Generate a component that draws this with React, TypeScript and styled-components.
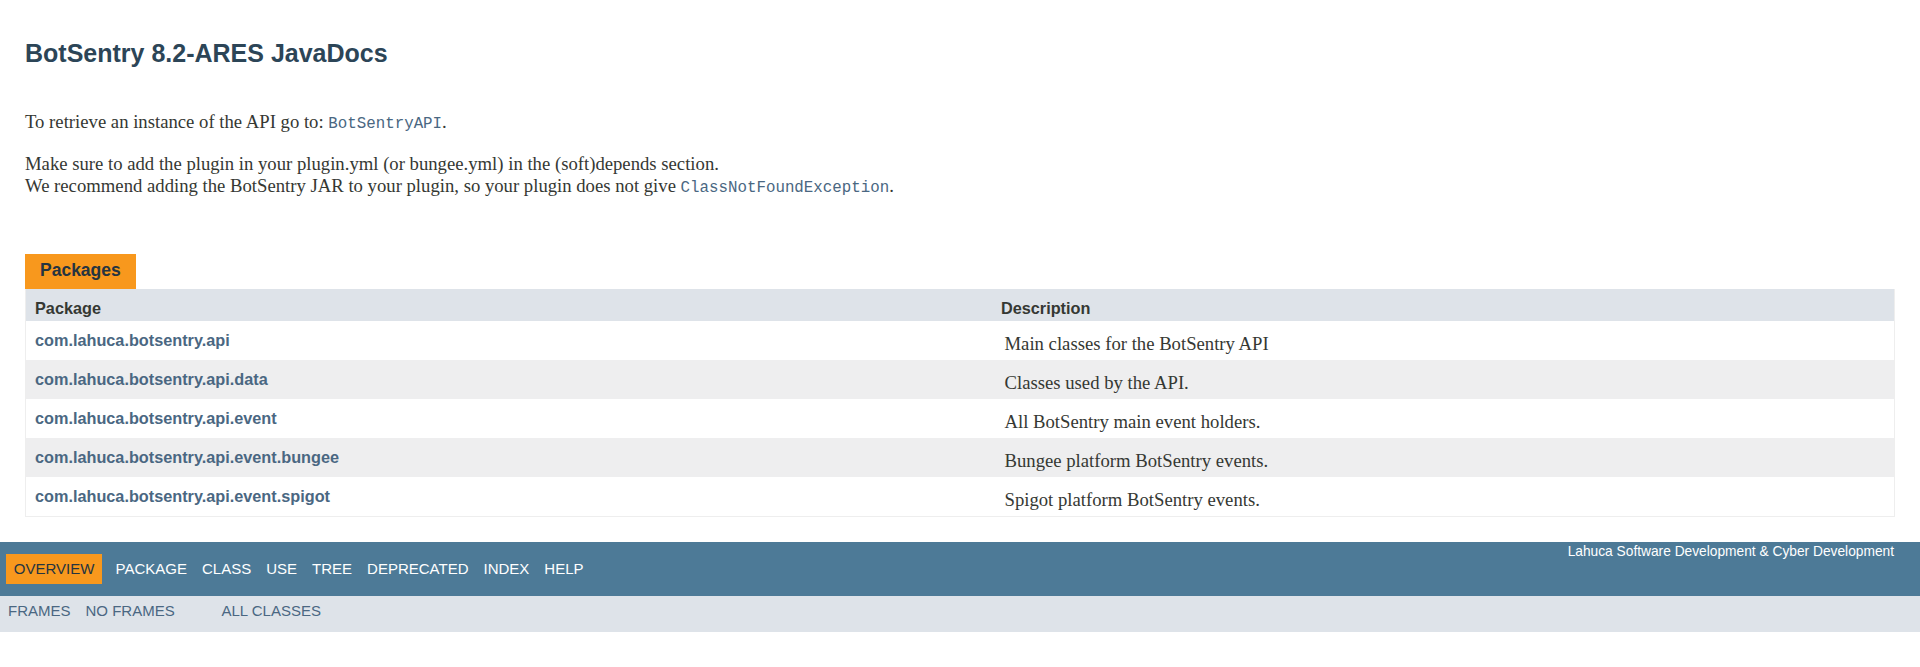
import { createGlobalStyle, styled } from 'styled-components'

const colors = {
  text: '#353833',
  title: '#2c4557',
  link: '#4a6782',
  tab: '#f8981d',
  tabText: '#253441',
  header: '#dee3e9',
  alt: '#eeeeef',
  nav: '#4d7a97',
  border: '#eeeeee',
}

const fonts = {
  sans: '"Liberation Sans", Arial, Helvetica, sans-serif',
  serif: '"Liberation Serif", "Times New Roman", serif',
  mono: '"Liberation Mono", "Courier New", monospace',
}

const packages = [
  { name: 'com.lahuca.botsentry.api', description: 'Main classes for the BotSentry API' },
  { name: 'com.lahuca.botsentry.api.data', description: 'Classes used by the API.' },
  { name: 'com.lahuca.botsentry.api.event', description: 'All BotSentry main event holders.' },
  { name: 'com.lahuca.botsentry.api.event.bungee', description: 'Bungee platform BotSentry events.' },
  { name: 'com.lahuca.botsentry.api.event.spigot', description: 'Spigot platform BotSentry events.' },
]

const navItems = ['Overview', 'Package', 'Class', 'Use', 'Tree', 'Deprecated', 'Index', 'Help']

export default function App() {
  return (
    <>
      <GlobalStyle />
      <Page>
        <Header>
          <Title>BotSentry 8.2-ARES JavaDocs</Title>
          <Intro>
            <Paragraph>
              To retrieve an instance of the API go to: <Code>BotSentryAPI</Code>.
            </Paragraph>
            <Paragraph>
              Make sure to add the plugin in your plugin.yml (or bungee.yml) in the (soft)depends section.
              <br />
              We recommend adding the BotSentry JAR to your plugin, so your plugin does not give{' '}
              <Code>ClassNotFoundException</Code>.
            </Paragraph>
          </Intro>
        </Header>

        <Content>
          <Caption>Packages</Caption>
          <Summary>
            <HeadRow>
              <HeadCell>Package</HeadCell>
              <HeadCell>Description</HeadCell>
            </HeadRow>
            {packages.map((pkg, i) => (
              <Row key={pkg.name} $alt={i % 2 === 1}>
                <PackageCell>
                  <a href="#">{pkg.name}</a>
                </PackageCell>
                <DescriptionCell>{pkg.description}</DescriptionCell>
              </Row>
            ))}
          </Summary>
        </Content>

        <BottomNav>
          <TopNav>
            <NavList>
              {navItems.map((item) => (
                <NavItem key={item} $active={item === 'Overview'}>
                  {item}
                </NavItem>
              ))}
            </NavList>
            <About>Lahuca Software Development &amp; Cyber Development</About>
          </TopNav>
          <SubNav>
            <SubList>
              <SubItem>Frames</SubItem>
              <SubItem>No Frames</SubItem>
            </SubList>
            <SubList>
              <SubItem>All Classes</SubItem>
            </SubList>
          </SubNav>
        </BottomNav>
      </Page>
    </>
  )
}

const GlobalStyle = createGlobalStyle`
  * {
    box-sizing: border-box;
  }

  body {
    margin: 0;
    background: #ffffff;
    color: ${colors.text};
    font-family: ${fonts.sans};
  }
`

const Page = styled.div`
  display: flex;
  flex-direction: column;
  width: 1920px;
`

const Header = styled.header`
  padding: 39px 25px 0;
`

const Title = styled.h1`
  margin: 0;
  font-family: ${fonts.sans};
  font-size: 25px;
  font-weight: bold;
  line-height: 28px;
  color: ${colors.title};
`

const Intro = styled.div`
  display: flex;
  flex-direction: column;
  gap: 20px;
  margin-top: 44px;
`

const Paragraph = styled.p`
  margin: 0;
  font-family: ${fonts.serif};
  font-size: 18.7px;
  line-height: 22px;
  color: ${colors.text};
`

const Code = styled.code`
  font-family: ${fonts.mono};
  font-size: 15.8px;
  line-height: 1;
  color: ${colors.link};
`

const Content = styled.main`
  display: flex;
  flex-direction: column;
  align-items: flex-start;
  padding: 0 25px;
  margin-top: 57px;
`

const Caption = styled.div`
  height: 35px;
  padding: 6px 15px 0;
  background: ${colors.tab};
  color: ${colors.tabText};
  font-size: 17.5px;
  font-weight: bold;
  white-space: nowrap;
`

const Summary = styled.div`
  width: 100%;
  border-left: 1px solid ${colors.border};
  border-right: 1px solid ${colors.border};
  border-bottom: 1px solid ${colors.border};
`

const RowBase = styled.div`
  display: grid;
  grid-template-columns: 966px 1fr;
`

const HeadRow = styled(RowBase)`
  height: 32px;
  background: ${colors.header};
`

const HeadCell = styled.div`
  padding: 10px 0 0 9px;
  font-size: 16.25px;
  font-weight: bold;
  color: ${colors.text};
`

const Row = styled(RowBase)<{ $alt: boolean }>`
  height: 39px;
  background: ${({ $alt }) => ($alt ? colors.alt : '#ffffff')};
`

const PackageCell = styled.div`
  padding: 10px 0 0 9px;
  font-size: 16.25px;
  font-weight: bold;

  a {
    color: ${colors.link};
    text-decoration: none;
  }
`

const DescriptionCell = styled.div`
  padding: 12px 0 0 12.5px;
  font-family: ${fonts.serif};
  font-size: 18.7px;
  color: ${colors.text};
`

const BottomNav = styled.nav`
  margin-top: 25px;
`

const TopNav = styled.div`
  display: flex;
  justify-content: space-between;
  align-items: flex-start;
  height: 54px;
  background: ${colors.nav};
`

const NavList = styled.ul`
  display: flex;
  margin: 12px 0 0;
  padding: 0;
  list-style: none;
`

const NavItem = styled.li<{ $active?: boolean }>`
  padding: 6px 7.5px;
  margin: ${({ $active }) => ($active ? '0 6.25px' : '0')};
  font-size: 15px;
  line-height: 18px;
  text-transform: uppercase;
  color: ${({ $active }) => ($active ? colors.tabText : '#ffffff')};
  background: ${({ $active }) => ($active ? colors.tab : 'transparent')};
`

const About = styled.div`
  margin-top: 1.5px;
  padding-right: 26px;
  font-size: 13.75px;
  color: #ffffff;
  white-space: nowrap;
`

const SubNav = styled.div`
  display: flex;
  height: 36px;
  background: ${colors.header};
`

const SubList = styled.ul`
  display: flex;
  margin: 0 31.25px 0 0;
  padding: 0 0 0 0.5px;
  list-style: none;
`

const SubItem = styled.li`
  padding: 6px 7.5px;
  font-size: 15px;
  line-height: 18px;
  text-transform: uppercase;
  color: ${colors.link};
`
